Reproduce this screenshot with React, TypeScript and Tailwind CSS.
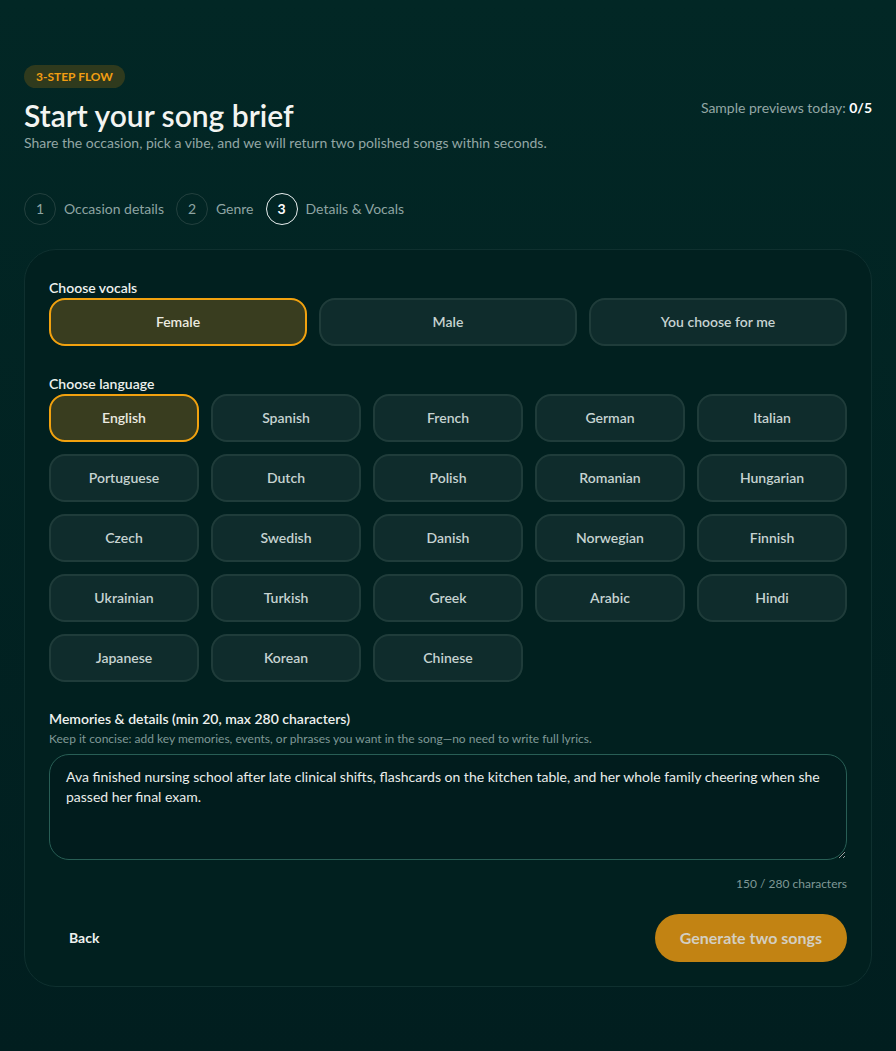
import React, { useState } from 'react';

const vocals = ['Female', 'Male', 'You choose for me'];

const languages = [
    'English', 'Spanish', 'French', 'German', 'Italian',
    'Portuguese', 'Dutch', 'Polish', 'Romanian', 'Hungarian',
    'Czech', 'Swedish', 'Danish', 'Norwegian', 'Finnish',
    'Ukrainian', 'Turkish', 'Greek', 'Arabic', 'Hindi',
    'Japanese', 'Korean', 'Chinese',
];

const steps = [
    { n: 1, label: 'Occasion details' },
    { n: 2, label: 'Genre' },
    { n: 3, label: 'Details & Vocals' },
];

const MEMO = 'Ava finished nursing school after late clinical shifts, flashcards on the kitchen table, and her whole family cheering when she passed her final exam.';

const Choice: React.FC<{ label: string; active: boolean; onClick: () => void }> = ({ label, active, onClick }) => (
    <button
        type="button"
        onClick={onClick}
        className={`h-12 rounded-2xl border-2 text-sm font-semibold ${
            active
                ? 'border-[#f2a20f] bg-[#393d1f] text-[#ecebe0]'
                : 'border-[#1f3c3a] bg-[#0f2c2c] text-[#c6d3d1]'
        }`}
    >
        {label}
    </button>
);

export default function App() {
    const [vocal, setVocal] = useState('Female');
    const [lang, setLang] = useState('English');
    const [memo, setMemo] = useState(MEMO);

    return (
        <div className="min-h-[1051px] bg-gradient-to-b from-[#022725] to-[#011e1f] px-6 pt-[65px] pb-16 font-['Lato','Noto_Sans',sans-serif] text-white">
            <div className="flex">
                <span className="flex h-[23px] items-center rounded-full bg-[#2f3a1d] px-3 text-xs font-bold text-[#f29e12]">
                    3-STEP FLOW
                </span>
            </div>

            <div className="mt-[9px] flex items-start justify-between">
                <div>
                    <h1 className="text-[30px] leading-9 font-semibold text-[#f3f4f1]">Start your song brief</h1>
                    <p className="text-sm leading-5 text-[#93a6a4]">
                        Share the occasion, pick a vibe, and we will return two polished songs within seconds.
                    </p>
                </div>
                <p className="pt-[1px] text-sm leading-5 text-[#93a6a4]">
                    Sample previews today: <span className="font-bold text-white">0/5</span>
                </p>
            </div>

            <div className="mt-10 flex items-center gap-3">
                {steps.map((s) => {
                    const current = s.n === 3;
                    return (
                        <div key={s.n} className="flex items-center gap-2">
                            <span
                                className={`flex h-8 w-8 items-center justify-center rounded-full text-sm ${
                                    current
                                        ? 'border-[1.5px] border-[#e8eeee] font-bold text-white'
                                        : 'border border-[#23403e] text-[#8ea4a2]'
                                }`}
                            >
                                {s.n}
                            </span>
                            <span className="text-sm text-[#8ea4a2]">{s.label}</span>
                        </div>
                    );
                })}
            </div>

            <div className="mt-6 rounded-[32px] border border-[#0f302f] bg-[#01201f] px-6 pt-7 pb-6">
                <h2 className="text-sm leading-5 font-semibold text-[#eef1ee]">Choose vocals</h2>
                <div className="grid grid-cols-3 gap-3">
                    {vocals.map((v) => (
                        <Choice key={v} label={v} active={vocal === v} onClick={() => setVocal(v)} />
                    ))}
                </div>

                <h2 className="mt-7 text-sm leading-5 font-semibold text-[#eef1ee]">Choose language</h2>
                <div className="grid grid-cols-5 gap-3">
                    {languages.map((l) => (
                        <Choice key={l} label={l} active={lang === l} onClick={() => setLang(l)} />
                    ))}
                </div>

                <h2 className="mt-[27px] text-sm leading-5 font-semibold text-[#eef1ee]">
                    Memories &amp; details (min 20, max 280 characters)
                </h2>
                <p className="mt-[2px] text-xs leading-4 text-[#7f9896]">
                    Keep it concise: add key memories, events, or phrases you want in the song—no need to write full lyrics.
                </p>
                <textarea
                    value={memo}
                    onChange={(e) => setMemo(e.target.value)}
                    maxLength={280}
                    className="mt-[7px] block h-[106px] w-full resize-y rounded-[20px] border border-[#285e55] bg-[#011c1d] px-4 py-3 text-sm leading-5 text-[#e9ecea] outline-none"
                />
                <p className="mt-4 text-right text-xs leading-4 text-[#7f9896]">{memo.length} / 280 characters</p>

                <div className="mt-[22px] flex items-center justify-between">
                    <button type="button" className="h-12 px-5 text-sm font-bold text-[#eef1ee]">
                        Back
                    </button>
                    <button
                        type="button"
                        className="h-12 rounded-full bg-[#c28313] px-[25px] text-base font-bold text-[#d3cfc2]"
                    >
                        Generate two songs
                    </button>
                </div>
            </div>
        </div>
    );
}
